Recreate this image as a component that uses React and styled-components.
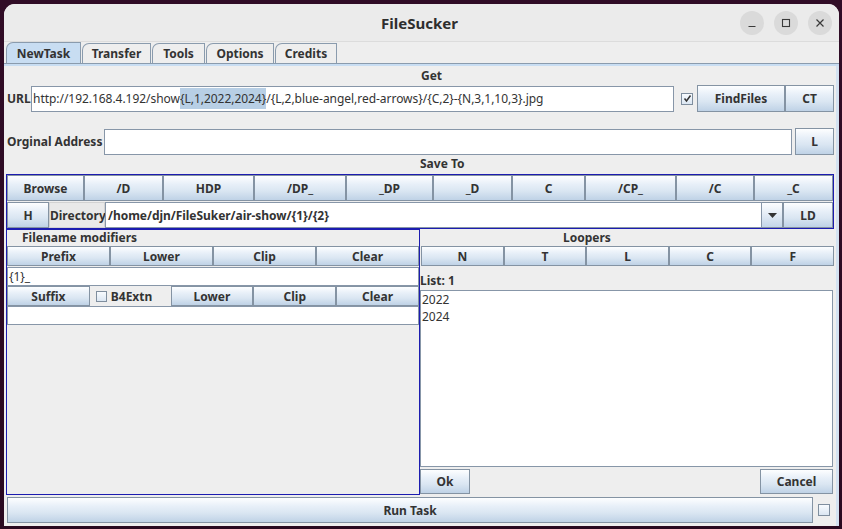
import React from "react";
import styled, { createGlobalStyle } from "styled-components";

const Global = createGlobalStyle`
  html, body { margin: 0; padding: 0; background: #2c0a22; }
  body { font-family: "Noto Sans", "DejaVu Sans", sans-serif; }
  * { box-sizing: border-box; }
`;

const Desktop = styled.div`
  width: 842px;
  height: 529px;
  background: linear-gradient(180deg, #300c26 0%, #2a0920 100%);
  padding: 4px 3px 0 4px;
  overflow: hidden;
`;

const Window = styled.div`
  width: 835px;
  height: 522px;
  background: #eeeeee;
  border-radius: 11px 11px 0 0;
  display: flex;
  flex-direction: column;
  overflow: hidden;
`;

const TitleBar = styled.div`
  height: 38px;
  flex: none;
  background: #ebebeb;
  border-bottom: 1px solid #dcdcdc;
  display: grid;
  grid-template-columns: 1fr auto 1fr;
  align-items: center;
`;

const Title = styled.div`
  grid-column: 2;
  font-weight: 700;
  font-size: 15px;
  color: #2e2e2e;
  padding-right: 4px;
`;

const Controls = styled.div`
  grid-column: 3;
  justify-self: end;
  display: flex;
  gap: 10px;
  padding-right: 7px;
`;

const WinBtn = styled.div`
  width: 24px;
  height: 24px;
  border-radius: 50%;
  background: #dadada;
  display: flex;
  align-items: center;
  justify-content: center;
`;

const TabStrip = styled.div`
  display: flex;
  align-items: flex-end;
  height: 21px;
  padding-left: 2px;
  flex: none;
`;

const Tab = styled.div`
  width: ${(p) => p.$w}px;
  height: ${(p) => (p.$sel ? 21 : 20)}px;
  margin-right: 1px;
  border: 1px solid #8a9bad;
  border-bottom: none;
  border-top-left-radius: 7px;
  background: ${(p) => (p.$sel ? "#c8ddf2" : "#eeeeee")};
  font-weight: 700;
  font-size: 12px;
  color: #333;
  display: flex;
  align-items: center;
  justify-content: center;
`;

const TabPanel = styled.div`
  flex: 1;
  border-top: 1px solid #8a9bad;
  box-shadow: inset 0 2px 0 #c8ddf2, inset -3px 0 0 #d3e2f1;
  padding: 0 5px 0 2px;
  display: flex;
  flex-direction: column;
`;

const SectionLabel = styled.div`
  height: 16px;
  line-height: 16px;
  margin-top: ${(p) => p.$mt || 0}px;
  padding-left: ${(p) => p.$indent || 0}px;
  font-weight: 700;
  font-size: 12px;
  color: #333;
  white-space: nowrap;
  flex: none;
`;

const Row = styled.div`
  display: flex;
  align-items: center;
  height: ${(p) => p.$h}px;
  margin-top: ${(p) => p.$mt || 0}px;
  padding-left: ${(p) => p.$pl || 0}px;
  flex: none;
`;

const FieldLabel = styled.div`
  width: ${(p) => p.$w}px;
  flex: none;
  padding-left: 1px;
  font-weight: 700;
  font-size: 12px;
  color: #333;
  white-space: nowrap;
`;

const TextField = styled.div`
  width: ${(p) => (p.$w ? `${p.$w}px` : "auto")};
  flex: ${(p) => (p.$w ? "none" : "1")};
  height: ${(p) => p.$h || 26}px;
  background: #ffffff;
  border: 1px solid #8796a8;
  padding-left: ${(p) => p.$pl ?? 1}px;
  display: flex;
  align-items: center;
  font-size: 12px;
  letter-spacing: -0.04px;
  font-weight: ${(p) => (p.$bold ? 700 : 400)};
  color: #333;
  white-space: nowrap;
  overflow: hidden;
`;

const LineField = styled(TextField)`
  flex: none;
  margin-top: ${(p) => p.$mt || 0}px;
`;

const Sel = styled.span`
  background: #b8cfe5;
  padding: 2px 0;
`;

const Button = styled.div`
  width: ${(p) => (p.$w ? `${p.$w}px` : "auto")};
  flex: ${(p) => (p.$w ? "none" : "1")};
  height: ${(p) => p.$h || 26}px;
  margin-left: ${(p) => p.$ml || 0}px;
  border: 1px solid #8493a3;
  background: linear-gradient(180deg, #fdfeff 0%, #e7eff8 35%, #dae6f2 62%, #bfd2e6 100%);
  font-weight: 700;
  font-size: 12px;
  color: #333;
  display: flex;
  align-items: center;
  justify-content: center;
  white-space: nowrap;
`;

const Box = styled.div`
  width: ${(p) => p.$s || 12}px;
  height: ${(p) => p.$s || 12}px;
  flex: none;
  margin-left: ${(p) => p.$ml || 0}px;
  margin-right: ${(p) => p.$mr || 0}px;
  border: 1px solid #7f8e9e;
  background: linear-gradient(180deg, #f8fbfe 0%, #dbe6f2 100%);
  display: flex;
  align-items: center;
  justify-content: center;
`;

const SaveGroup = styled.div`
  margin-top: 2px;
  width: 828px;
  border: 1px solid #1c1cb0;
  display: flex;
  flex-direction: column;
  gap: 1px;
  flex: none;
`;

const DirLabel = styled.div`
  width: 56px;
  height: 26px;
  flex: none;
  background: #e9e9e9;
  border: 1px solid #d2d2d2;
  font-weight: 700;
  font-size: 12px;
  color: #333;
  display: flex;
  align-items: center;
`;

const ArrowBtn = styled.div`
  width: 21px;
  height: 26px;
  flex: none;
  border: 1px solid #8493a3;
  border-left: none;
  background: linear-gradient(180deg, #fdfeff 0%, #e2ebf5 50%, #c4d6e8 100%);
  display: flex;
  align-items: center;
  justify-content: center;
`;

const Panels = styled.div`
  display: grid;
  grid-template-columns: 414px 414px;
  height: 266px;
  flex: none;
`;

const ModPanel = styled.div`
  border: 1px solid #1c1cb0;
  display: flex;
  flex-direction: column;
`;

const CheckCell = styled.div`
  flex: 1;
  height: 20px;
  display: flex;
  align-items: center;
  font-weight: 700;
  font-size: 12px;
  color: #333;
`;

const LooperPanel = styled.div`
  display: flex;
  flex-direction: column;
  padding-top: 1px;
`;

const ListBox = styled.div`
  margin-top: 1px;
  height: 177px;
  margin-right: 1px;
  background: #ffffff;
  border: 1px solid #8796a8;
  padding: 0 0 0 1px;
  font-size: 12px;
  color: #333;
  line-height: 17px;
  flex: none;
`;

const SpreadRow = styled.div`
  display: flex;
  justify-content: space-between;
  margin-top: 2px;
  padding-right: 1px;
`;

const Check = () => (
  <svg width="9" height="9" viewBox="0 0 9 9">
    <path d="M1.5 4.5 L3.5 7 L7.5 1.5" fill="none" stroke="#333" strokeWidth="1.5" />
  </svg>
);

const saveButtons = [
  ["Browse", 77], ["/D", 79], ["HDP", 91], ["/DP_", 92], ["_DP", 87],
  ["_D", 79], ["C", 73], ["/CP_", 91], ["/C", 78], ["_C", 79],
];

export default function App() {
  return (
    <>
      <Global />
      <Desktop>
        <Window>
          <TitleBar>
            <Title>FileSucker</Title>
            <Controls>
              <WinBtn>
                <svg width="10" height="10" viewBox="0 0 10 10">
                  <path d="M1.5 8.5 H8.5" stroke="#3a3a3a" strokeWidth="1.2" />
                </svg>
              </WinBtn>
              <WinBtn>
                <svg width="10" height="10" viewBox="0 0 10 10">
                  <rect x="1.5" y="1.5" width="7" height="7" fill="none" stroke="#3a3a3a" strokeWidth="1.1" />
                </svg>
              </WinBtn>
              <WinBtn>
                <svg width="10" height="10" viewBox="0 0 10 10">
                  <path d="M1.5 1.5 L8.5 8.5 M8.5 1.5 L1.5 8.5" stroke="#3a3a3a" strokeWidth="1.2" />
                </svg>
              </WinBtn>
            </Controls>
          </TitleBar>

          <TabStrip>
            <Tab $w={75} $sel>NewTask</Tab>
            <Tab $w={69}>Transfer</Tab>
            <Tab $w={53}>Tools</Tab>
            <Tab $w={68}>Options</Tab>
            <Tab $w={62}>Credits</Tab>
          </TabStrip>

          <TabPanel>
            <SectionLabel $mt={4} $indent={415}>Get</SectionLabel>
            <Row $h={27} $mt={1}>
              <FieldLabel $w={25}>URL</FieldLabel>
              <TextField $w={643}>
                http://192.168.4.192/show<Sel>{"{L,1,2022,2024}"}</Sel>
                {"/{L,2,blue-angel,red-arrows}/{C,2}-{N,3,1,10,3}.jpg"}
              </TextField>
              <Box $ml={7}>
                <Check />
              </Box>
              <Button $w={88} $h={27} $ml={4}>FindFiles</Button>
              <Button $w={49} $h={27}>CT</Button>
            </Row>

            <Row $h={27} $mt={16}>
              <FieldLabel $w={98}>Orginal Address</FieldLabel>
              <TextField $w={688}></TextField>
              <Button $w={39} $h={27} $ml={3}>L</Button>
            </Row>

            <SectionLabel $mt={1} $indent={414}>Save To</SectionLabel>
            <SaveGroup>
              <Row $h={26}>
                {saveButtons.map(([t, w]) => (
                  <Button key={t} $w={w}>{t}</Button>
                ))}
              </Row>
              <Row $h={26}>
                <Button $w={42}>H</Button>
                <DirLabel>Directory</DirLabel>
                <TextField $bold $pl={2}>/home/djn/FileSuker/air-show/{"{1}"}/{"{2}"}</TextField>
                <ArrowBtn>
                  <svg width="9" height="5" viewBox="0 0 9 5">
                    <path d="M0 0 H9 L4.5 5 Z" fill="#333" />
                  </svg>
                </ArrowBtn>
                <Button $w={50}>LD</Button>
              </Row>
            </SaveGroup>

            <Panels>
              <ModPanel>
                <SectionLabel $indent={15}>Filename modifiers</SectionLabel>
                <Row $h={20}>
                  <Button $h={20}>Prefix</Button>
                  <Button $h={20}>Lower</Button>
                  <Button $h={20}>Clip</Button>
                  <Button $h={20}>Clear</Button>
                </Row>
                <LineField $h={19} $mt={1}>{"{1}_"}</LineField>
                <Row $h={20}>
                  <Button $h={20}>Suffix</Button>
                  <CheckCell>
                    <Box $s={11} $ml={6} $mr={4} />
                    B4Extn
                  </CheckCell>
                  <Button $h={20}>Lower</Button>
                  <Button $h={20}>Clip</Button>
                  <Button $h={20}>Clear</Button>
                </Row>
                <LineField $h={19}></LineField>
              </ModPanel>

              <LooperPanel>
                <SectionLabel $indent={143}>Loopers</SectionLabel>
                <Row $h={20} $pl={1}>
                  <Button $h={20}>N</Button>
                  <Button $h={20}>T</Button>
                  <Button $h={20}>L</Button>
                  <Button $h={20}>C</Button>
                  <Button $h={20}>F</Button>
                </Row>
                <SectionLabel $mt={7}>List: 1</SectionLabel>
                <ListBox>
                  <div>2022</div>
                  <div>2024</div>
                </ListBox>
                <SpreadRow>
                  <Button $w={50} $h={25}>Ok</Button>
                  <Button $w={73} $h={25}>Cancel</Button>
                </SpreadRow>
              </LooperPanel>
            </Panels>

            <Row $h={26} $mt={2}>
              <Button $w={806} $ml={1}>Run Task</Button>
              <Box $ml={5} />
            </Row>
          </TabPanel>
        </Window>
      </Desktop>
    </>
  );
}
